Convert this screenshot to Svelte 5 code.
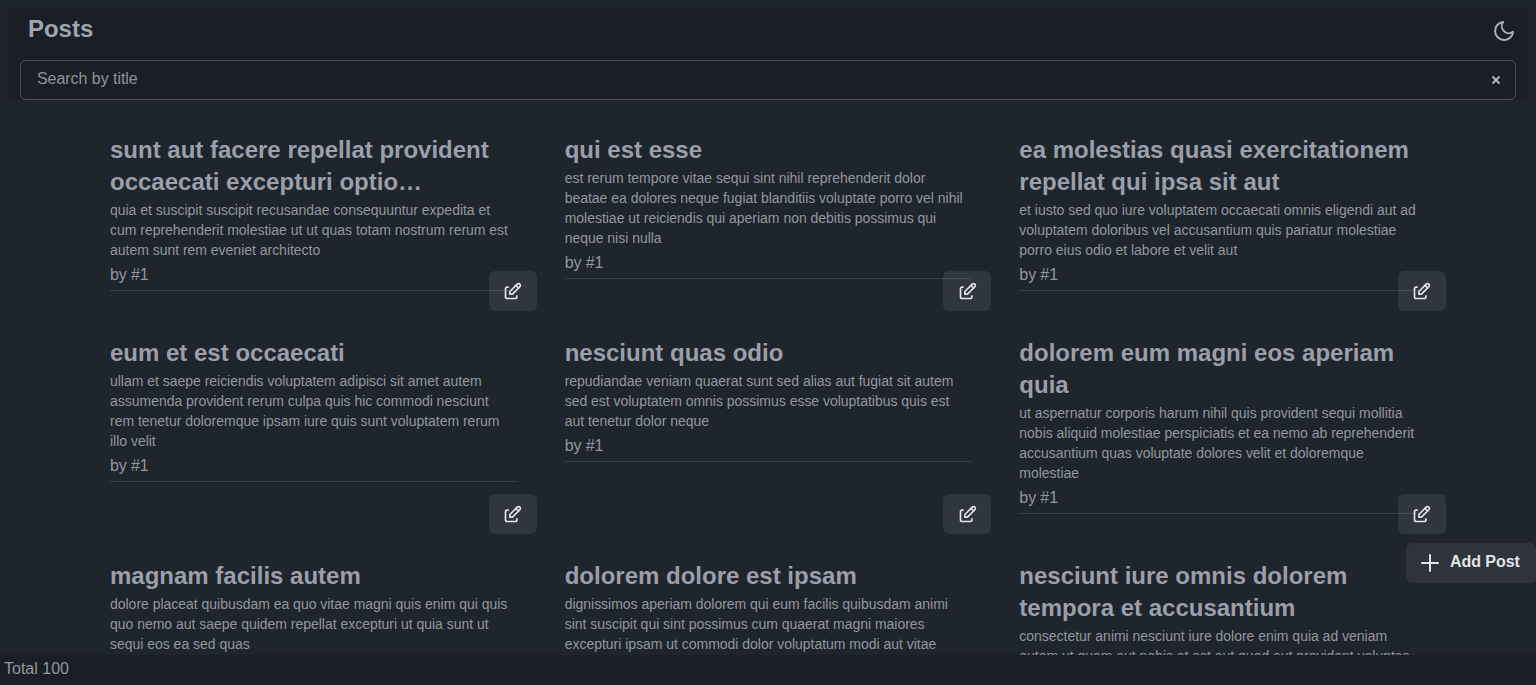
<script>
  const posts = [
    { title: 'sunt aut facere repellat provident occaecati excepturi optio…', body: 'quia et suscipit suscipit recusandae consequuntur expedita et cum reprehenderit molestiae ut ut quas totam nostrum rerum est autem sunt rem eveniet architecto' },
    { title: 'qui est esse', body: 'est rerum tempore vitae sequi sint nihil reprehenderit dolor beatae ea dolores neque fugiat blanditiis voluptate porro vel nihil molestiae ut reiciendis qui aperiam non debitis possimus qui neque nisi nulla' },
    { title: 'ea molestias quasi exercitationem repellat qui ipsa sit aut', body: 'et iusto sed quo iure voluptatem occaecati omnis eligendi aut ad voluptatem doloribus vel accusantium quis pariatur molestiae porro eius odio et labore et velit aut' },
    { title: 'eum et est occaecati', body: 'ullam et saepe reiciendis voluptatem adipisci sit amet autem assumenda provident rerum culpa quis hic commodi nesciunt rem tenetur doloremque ipsam iure quis sunt voluptatem rerum illo velit' },
    { title: 'nesciunt quas odio', body: 'repudiandae veniam quaerat sunt sed alias aut fugiat sit autem sed est voluptatem omnis possimus esse voluptatibus quis est aut tenetur dolor neque' },
    { title: 'dolorem eum magni eos aperiam quia', body: 'ut aspernatur corporis harum nihil quis provident sequi mollitia nobis aliquid molestiae perspiciatis et ea nemo ab reprehenderit accusantium quas voluptate dolores velit et doloremque molestiae' },
    { title: 'magnam facilis autem', body: 'dolore placeat quibusdam ea quo vitae magni quis enim qui quis quo nemo aut saepe quidem repellat excepturi ut quia sunt ut sequi eos ea sed quas' },
    { title: 'dolorem dolore est ipsam', body: 'dignissimos aperiam dolorem qui eum facilis quibusdam animi sint suscipit qui sint possimus cum quaerat magni maiores excepturi ipsam ut commodi dolor voluptatum modi aut vitae' },
    { title: 'nesciunt iure omnis dolorem tempora et accusantium', body: 'consectetur animi nesciunt iure dolore enim quia ad veniam autem ut quam aut nobis et est aut quod aut provident voluptas autem voluptas' },
  ];
</script>

<div class="page">
  <header class="top">
    <div class="title-row">
      <h1>Posts</h1>
      <svg class="moon" viewBox="0 0 24 24" fill="none" stroke="currentColor" stroke-width="2" stroke-linecap="round" stroke-linejoin="round">
        <path d="M21 12.79A9 9 0 1 1 11.21 3 7 7 0 0 0 21 12.79z" />
      </svg>
    </div>
    <div class="search">
      <input type="text" placeholder="Search by title" />
      <svg class="clear" viewBox="0 0 10 10" fill="none" stroke="currentColor" stroke-width="2.2">
        <path d="M1.5 1.5l7 7M8.5 1.5l-7 7" />
      </svg>
    </div>
  </header>

  <main class="list">
    <div class="grid">
      {#each posts as post}
        <article class="card">
          <div class="content">
            <h2>{post.title}</h2>
            <p class="body">{post.body}</p>
            <p class="by">by #1</p>
            <hr />
          </div>
          <div class="actions">
            <button class="edit" aria-label="Edit post">
              <svg viewBox="0 0 24 24" fill="none" stroke="currentColor" stroke-width="1.9" stroke-linecap="round" stroke-linejoin="round">
                <path d="M7 7h-1a2 2 0 0 0 -2 2v9a2 2 0 0 0 2 2h9a2 2 0 0 0 2 -2v-1" />
                <path d="M20.385 6.585a2.1 2.1 0 0 0 -2.97 -2.97l-8.415 8.385v3h3l8.385 -8.415z" />
                <path d="M16 5l3 3" />
              </svg>
            </button>
          </div>
        </article>
      {/each}
    </div>
  </main>

  <button class="add">
    <svg viewBox="0 0 24 24" fill="none" stroke="currentColor" stroke-width="2" stroke-linecap="round">
      <path d="M12 4v16M4 12h16" />
    </svg>
    Add Post
  </button>

  <footer class="total">Total 100</footer>
</div>

<style>
  :global(body) {
    margin: 0;
    background: #1e252d;
  }

  .page {
    position: relative;
    height: 685px;
    display: flex;
    flex-direction: column;
    overflow: hidden;
    background: #1e252d;
    font-family: 'Liberation Sans', Arial, sans-serif;
    color: #a0a5ad;
  }

  .top {
    flex: none;
    height: 92px;
    margin: 8px 8px 0;
    background: #1a1f27;
    box-sizing: border-box;
  }

  .title-row {
    display: flex;
    justify-content: space-between;
    align-items: center;
    height: 44px;
    padding: 0 12px 0 20px;
  }

  h1 {
    margin: 0 0 2px;
    font-size: 24px;
    line-height: 42px;
    font-weight: 700;
    letter-spacing: -0.03px;
    color: #a0a5b2;
  }

  .moon {
    width: 24px;
    height: 24px;
    color: #a9afbc;
    margin-top: 2px;
  }

  .search {
    position: relative;
    margin: 8px 12px 0;
  }

  input {
    display: block;
    width: 100%;
    box-sizing: border-box;
    height: 40px;
    padding: 0 16px 2px;
    border: 1px solid #4c5158;
    border-radius: 6px;
    background: transparent;
    font: 16px 'Liberation Sans', Arial, sans-serif;
    letter-spacing: -0.05px;
    color: #a0a5ad;
    outline: none;
  }

  input::placeholder {
    color: #8e939b;
    opacity: 1;
  }

  .clear {
    position: absolute;
    right: 15px;
    top: 15px;
    width: 10px;
    height: 10px;
    color: #a9afbc;
  }

  .list {
    flex: 1;
    min-height: 0;
    overflow: hidden;
    padding: 33px 110px 0;
  }

  .grid {
    display: grid;
    grid-template-columns: repeat(3, 1fr);
    column-gap: 48px;
    row-gap: 25px;
  }

  .card {
    display: flex;
    flex-direction: column;
  }

  .content {
    margin-bottom: -20px;
  }

  h2 {
    margin: 0 0 2px;
    padding-top: 1px;
    font-size: 24px;
    line-height: 32px;
    font-weight: 700;
    color: #9a9fab;
  }

  .body {
    margin: 0 0 2px;
    padding-right: 2px;
    font-size: 14px;
    line-height: 20px;
    letter-spacing: -0.02px;
    color: #92979f;
  }

  .by {
    margin: 0;
    padding-top: 1px;
    font-size: 16px;
    line-height: 24px;
    letter-spacing: -0.1px;
    color: #92979f;
  }

  hr {
    margin: 3px 0 0;
    border: none;
    border-top: 1px solid #3a4049;
  }

  .actions {
    margin-top: auto;
    display: flex;
    justify-content: flex-end;
    margin-right: -20px;
    position: relative;
  }

  .edit {
    width: 48px;
    height: 40px;
    padding: 0;
    border: none;
    border-radius: 6px;
    background: rgba(255, 255, 255, 0.08);
    color: #e2e4e8;
    display: flex;
    align-items: center;
    justify-content: center;
  }

  .edit svg {
    width: 21px;
    height: 21px;
  }

  .add {
    position: absolute;
    right: 0;
    top: 543px;
    width: 130px;
    height: 40px;
    padding: 0 0 2px 12px;
    border: none;
    border-radius: 6px;
    background: #2f343c;
    color: #e2e4e8;
    font: 700 16px 'Liberation Sans', Arial, sans-serif;
    letter-spacing: -0.05px;
    display: flex;
    align-items: center;
    gap: 8px;
    box-sizing: border-box;
  }

  .add svg {
    width: 24px;
    height: 24px;
    margin-top: 2px;
  }

  .total {
    flex: none;
    height: 30px;
    padding-left: 4px;
    background: #1a1f27;
    font-size: 16px;
    line-height: 28px;
    color: #92979f;
  }
</style>
